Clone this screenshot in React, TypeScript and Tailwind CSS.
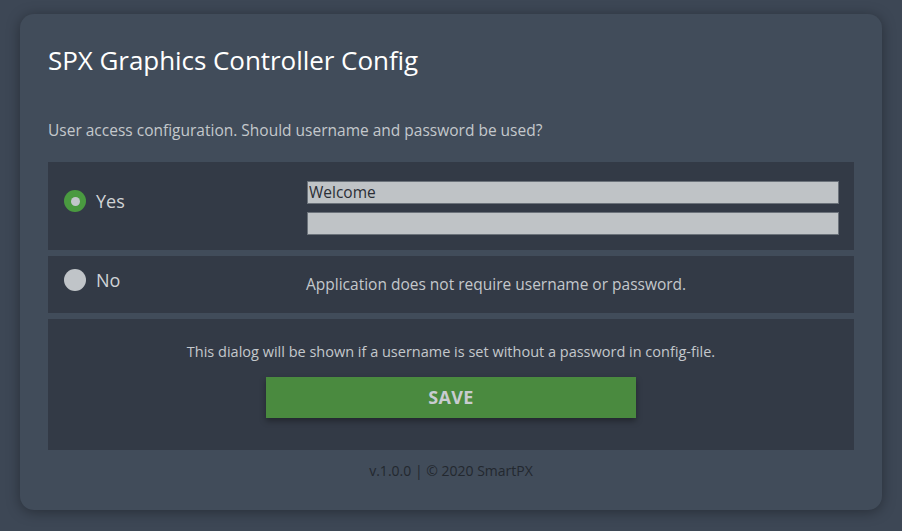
import React from "react"

function Radio({ checked }: { checked: boolean }) {
	return checked ? (
		<span className="flex h-[22px] w-[22px] items-center justify-center rounded-full bg-[#4a9a40]">
			<span className="h-[9px] w-[9px] rounded-full bg-[#c2c6ca]" />
		</span>
	) : (
		<span className="h-[22px] w-[22px] rounded-full bg-[#c0c4c8]" />
	)
}

export default function App() {
	return (
		<div
			className="min-h-[531px] w-full bg-[#3d4755] pt-[14px] pl-[20px] pr-[20px] pb-[21px]"
			style={{ fontFamily: '"Open Sans", "Noto Sans", sans-serif' }}
		>
			<div className="flex h-[496px] flex-col rounded-[14px] bg-[#414c5a] px-[28px] pt-[28px] shadow-[0_2px_14px_rgba(0,0,0,0.35)]">
				<h1 className="h-[36px] text-[26px] leading-[36px] tracking-[-0.05px] text-white">SPX Graphics Controller Config</h1>
				<p className="mt-[41px] text-[15.5px] leading-[22px] text-[#c4c8cc]">
					User access configuration. Should username and password be used?
				</p>

				<div className="mt-[21px] flex flex-col gap-[6px]">
					<div className="flex h-[88px] bg-[#333a46] pt-[19px] pr-[15px]">
						<label className="mt-[8px] flex h-[24px] w-[259px] items-center gap-[10px] pl-[16px] text-[18px] text-[#d0d3d6]">
							<Radio checked />
							Yes
						</label>
						<div className="flex flex-1 flex-col gap-[8px]">
							<input
								defaultValue="Welcome"
								className="h-[23px] w-full border border-[#6b727a] bg-[#bfc3c6] px-[1px] text-[15.5px] text-[#2b2f36] outline-none"
								style={{ fontFamily: '"Open Sans", sans-serif' }}
							/>
							<input
								type="password"
								className="h-[23px] w-full border border-[#6b727a] bg-[#bfc3c6] px-[1px] text-[15px] outline-none"
							/>
						</div>
					</div>

					<div className="flex h-[57px] bg-[#333a46]">
						<label className="mt-[12px] flex h-[24px] w-[258px] items-center gap-[10px] pl-[16px] text-[18px] text-[#d0d3d6]">
							<Radio checked={false} />
							No
						</label>
						<p className="mt-[17px] text-[15.5px] leading-[22px] text-[#c4c8cc]">
							Application does not require username or password.
						</p>
					</div>

					<div className="flex h-[131px] flex-col items-center bg-[#333a46] pt-[22px]">
						<p className="text-[14.5px] leading-[22px] text-[#c4c8cc]">
							This dialog will be shown if a username is set without a password in config-file.
						</p>
						<button className="mt-[14px] h-[41px] w-[370px] bg-[#4a8a3f] text-[18px] font-bold tracking-[0.3px] text-[#c8ccd0] shadow-[0_3px_6px_rgba(0,0,0,0.35)]">
							SAVE
						</button>
					</div>
				</div>

				<p className="mt-[11px] text-center text-[14px] leading-[20px] text-[#23282f]">
					v.1.0.0 | © 2020 SmartPX
				</p>
			</div>
		</div>
	)
}
